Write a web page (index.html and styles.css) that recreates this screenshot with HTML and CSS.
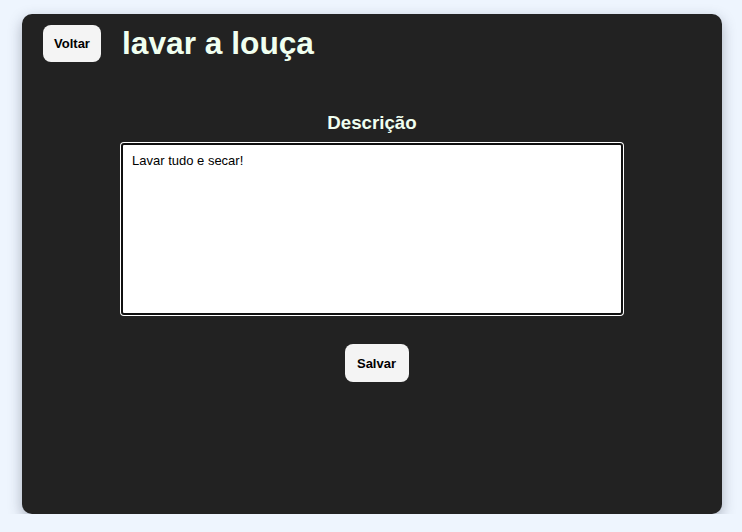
FILE: index.html
```html
<!DOCTYPE html>
<html lang="pt-BR">
<head>
<meta charset="utf-8">
<title>lavar a louça</title>
<link rel="stylesheet" href="styles.css">
</head>
<body>
  <div class="card">
    <header class="top">
      <button class="btn btn-back">Voltar</button>
      <h1 class="title">lavar a louça</h1>
    </header>
    <main class="editor">
      <h3 class="label">Descrição</h3>
      <textarea class="desc" spellcheck="false">Lavar tudo e secar!</textarea>
      <button class="btn btn-save">Salvar</button>
    </main>
  </div>
</body>
</html>
```
FILE: styles.css
```css
html, body {
  margin: 0;
  padding: 0;
}
body {
  background: #eef5fe;
  font-family: "Liberation Sans", Arial, sans-serif;
  padding: 14px 20px 0 22px;
}
.card {
  width: 700px;
  height: 500px;
  box-sizing: border-box;
  background: #222222;
  border-radius: 10px;
  box-shadow: 0 5px 14px rgba(40, 50, 70, 0.35);
  padding: 11px 21px;
}
.top {
  display: flex;
  align-items: center;
  gap: 21px;
}
.btn {
  font-family: "Liberation Sans", Arial, sans-serif;
  font-weight: bold;
  font-size: 13px;
  color: #000;
  background: #f4f4f4;
  border: none;
  border-radius: 8px;
  cursor: pointer;
}
.btn-back {
  height: 37px;
  width: 58px;
  padding: 0;
}
.title {
  margin: 0;
  font-size: 31.7px;
  font-weight: bold;
  color: #f0fff0;
  line-height: 37px;
}
.editor {
  display: flex;
  flex-direction: column;
  align-items: center;
  padding-top: 50px;
}
.label {
  margin: 0;
  font-size: 18.72px;
  font-weight: bold;
  color: #f0fff0;
}
.desc {
  margin-top: 9px;
  width: 502px;
  height: 172px;
  box-sizing: border-box;
  border: 2px solid #101010;
  border-radius: 3px;
  box-shadow: 0 0 0 1px #ffffff;
  outline: none;
  background: #fff;
  color: #000;
  padding: 8px 8px 8px 9px;
  font-family: "Liberation Sans", Arial, sans-serif;
  font-size: 13px;
  resize: none;
}
.btn-save {
  margin-top: 29px;
  margin-left: 9px;
  height: 38px;
  width: 64px;
  padding: 0;
}
```
